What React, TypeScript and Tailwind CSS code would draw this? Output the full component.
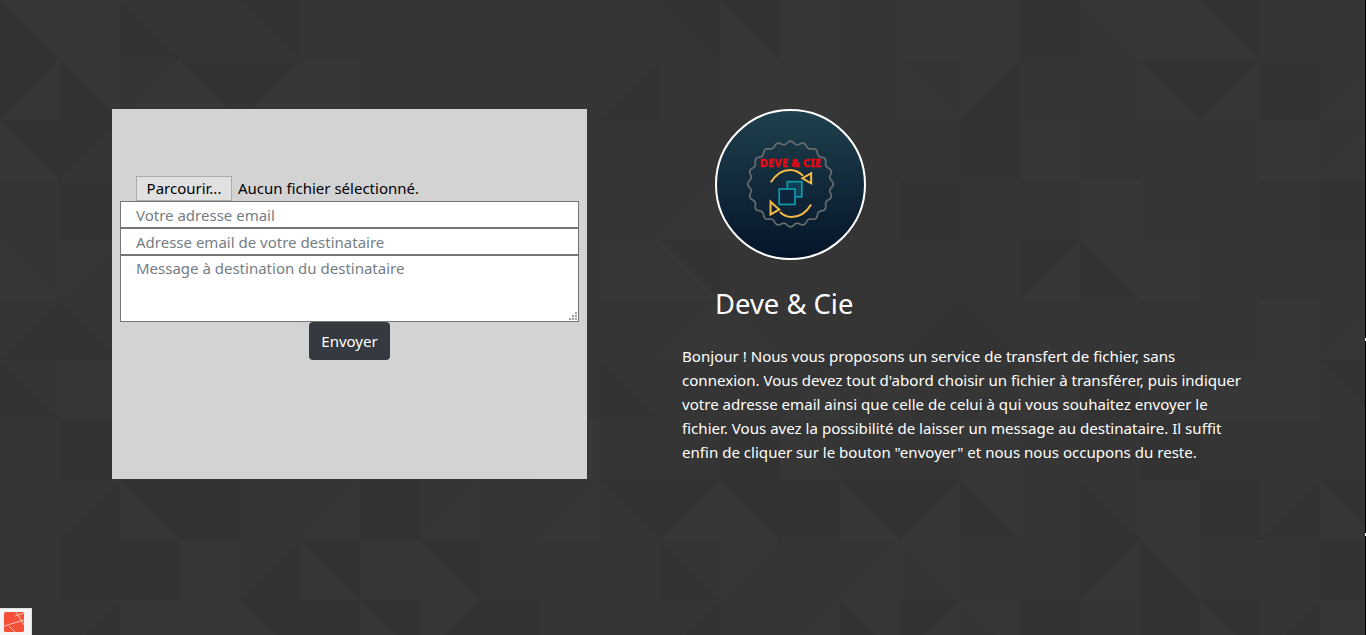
const FONT = "font-['Noto_Sans','Liberation_Sans',sans-serif]";

// 60px triangle grid, one row per line. Token: shade, or "\ab" / "/ab" for a split cell
const BG_ROWS = [
  "\\dl l \\dm m \\md m m m m m m \\md \\ld l m \\ll l d \\ml l \\ld m m",
  "/dl \\dl /ml \\ld /dl l m m m m /md m l l m \\lm /ld \\mm m \\ld /dl d /ml",
  "\\ld /dm m l m l m m l m m m m m m m d l m m m l /ml",
  "m d m m m m m m m m m /ml l m m d m m l m m m d",
  "\\lm /lm m m m m m m m m l \\ld m m m m m /dl \\dl l m m m",
  "/md \\dm m m m m m m m m m /ml \\lm m m /md \\dm m m m m l /ml",
  "\\dm l m m m m m m m m \\dm m m /ml \\ml m m l d m l l \\md",
  "m d m m m m m m m l m m d \\lm m m l m m d m m m",
  "m /md \\ld d m /ml d /ml m /ml \\md /dl \\ld d \\ld /dl \\dl m \\dm l d /md \\ld",
  "m d d l /md \\ld /ll \\ld m m m \\dm /lm m /ml \\ml m m /dl \\dl m m d",
  "m /md l l \\ld d \\ld /ld d m m /md m /ml \\dl /dl \\ml d m d \\ld /md l",
];

const SHADE: Record<string, string> = { m: "#353535", d: "#333333", l: "#373737" };

function TriangleBackground() {
  return (
    <svg className="absolute inset-0" width="1366" height="635" aria-hidden="true">
      {BG_ROWS.map((row, r) =>
        row.split(" ").map((cell, c) => {
          const x = c * 60;
          const y = r * 60;
          const x2 = x + 60;
          const y2 = y + 60;
          if (cell[0] === "\\") {
            return (
              <g key={`${r}-${c}`}>
                <rect x={x} y={y} width="60" height="60" fill={SHADE[cell[1]]} />
                <polygon points={`${x},${y} ${x2},${y} ${x2},${y2}`} fill={SHADE[cell[2]]} />
              </g>
            );
          }
          if (cell[0] === "/") {
            return (
              <g key={`${r}-${c}`}>
                <rect x={x} y={y} width="60" height="60" fill={SHADE[cell[1]]} />
                <polygon points={`${x2},${y} ${x2},${y2} ${x},${y2}`} fill={SHADE[cell[2]]} />
              </g>
            );
          }
          return <rect key={`${r}-${c}`} x={x} y={y} width="60" height="60" fill={SHADE[cell]} />;
        }),
      )}
    </svg>
  );
}

function scallopPoints() {
  const pts: string[] = [];
  for (let i = 0; i < 360; i++) {
    const a = (i / 360) * Math.PI * 2;
    const rad = 41 + 1.5 * Math.cos(a * 20);
    pts.push(`${(75 + rad * Math.sin(a)).toFixed(2)},${(74.5 - rad * Math.cos(a)).toFixed(2)}`);
  }
  return pts.join(" ");
}

function Logo() {
  return (
    <svg width="151" height="151" viewBox="0 0 150 150" className="block">
      <defs>
        <linearGradient id="logoBg" x1="0" y1="0" x2="0" y2="1">
          <stop offset="0" stopColor="#1f404d" />
          <stop offset="1" stopColor="#051429" />
        </linearGradient>
      </defs>
      <circle cx="75" cy="75" r="74" fill="url(#logoBg)" stroke="#fff" strokeWidth="2" />
      <polygon points={scallopPoints()} fill="none" stroke="#666c6f" strokeWidth="1.7" />
      <text
        x="75"
        y="57.8"
        textAnchor="middle"
        fill="#ee0510"
        stroke="#ee0510"
        strokeWidth="0.25"
        fontSize="11"
        fontWeight="800"
        textLength="61"
        fontFamily="'Noto Sans', sans-serif"
      >
        DEVE &amp; CIE
      </text>
      <g fill="none" stroke="#f6bb48" strokeWidth="2">
        <path d="M55.5 72.8Q63 60.5 74.5 60.5Q82 60.5 87.5 66.5" />
        <polygon points="86.8,68.8 95.5,63.8 95.5,73.8" />
        <path d="M95.5 94.8Q88 107.2 76.2 107.2Q69 107.2 64.5 102.2" />
        <polygon points="63.8,99.8 55.2,92.2 55.2,104.8" />
      </g>
      <g stroke="#0c9dad" strokeWidth="1.7">
        <rect x="71.8" y="72.2" width="14.4" height="15" fill="#0d3f52" />
        <rect x="63.8" y="79.5" width="15.7" height="15.3" fill="#10233c" />
      </g>
    </svg>
  );
}

function DebugBadge() {
  return (
    <div className="absolute bottom-0 left-0 flex h-[27px] w-[32px] items-start border-t border-r border-[#e0e0e0] bg-[#f5f5f5] pt-[3px] pl-[4px]">
      <svg width="20" height="20" viewBox="0 0 20 20">
        <rect width="20" height="20" rx="1.5" fill="#f4503a" />
        <path d="M0 14L20 8M5 14L11 20M12 0L20 13M11 4L20 1" stroke="#ffd9d2" strokeWidth="0.8" fill="none" />
      </svg>
    </div>
  );
}

export default function App() {
  return (
    <div className={`relative h-[635px] w-[1366px] overflow-hidden bg-[#353535] ${FONT}`}>
      <TriangleBackground />

      <main className="relative flex gap-[95px] pt-[109px] pl-[112px]">
        <form className="flex h-[370px] w-[475px] flex-col bg-[#d3d3d3] px-[8px] pt-[66px]">
          <div className="flex h-[26px] items-center gap-[6px] pl-[16px] text-[15px] text-black">
            <button type="button" className="h-[25px] w-[96px] border border-[#adadad] bg-[#e1e1e1]">
              Parcourir...
            </button>
            <span>Aucun fichier sélectionné.</span>
          </div>
          <input
            placeholder="Votre adresse email"
            className="h-[27px] border border-[#767676] bg-white px-[15px] text-[15px] placeholder:text-[#757d84]"
          />
          <input
            placeholder="Adresse email de votre destinataire"
            className="h-[27px] border border-[#767676] bg-white px-[15px] text-[15px] placeholder:text-[#757d84]"
          />
          <div className="relative flex h-[67px]">
            <textarea
              placeholder="Message à destination du destinataire"
              className="flex-1 resize-none border border-[#767676] bg-white px-[15px] py-[1px] text-[15px] placeholder:text-[#757d84]"
            />
            {/* resize grip */}
            <svg className="absolute right-[2px] bottom-[2px]" width="8" height="8" viewBox="0 0 8 8" fill="#a3a3a3">
              <rect x="6" y="0" width="2" height="2" />
              <rect x="3" y="3" width="2" height="2" />
              <rect x="6" y="3" width="2" height="2" />
              <rect x="0" y="6" width="2" height="2" />
              <rect x="3" y="6" width="2" height="2" />
              <rect x="6" y="6" width="2" height="2" />
            </svg>
          </div>
          <button
            type="button"
            className="mx-auto h-[38px] w-[81px] rounded-[4px] bg-[#343a40] text-[15px] text-white"
          >
            Envoyer
          </button>
        </form>

        <section className="w-[565px] text-white">
          <div className="pl-[33px]">
            <Logo />
            <h3 className="mt-[24px] h-[40px] text-[27.4px] leading-[40px]">Deve &amp; Cie</h3>
          </div>
          <p className="mt-[20px] text-[15.08px] leading-[24px]">
            Bonjour ! Nous vous proposons un service de transfert de fichier, sans connexion. Vous devez tout
            d'abord choisir un fichier à transférer, puis indiquer votre adresse email ainsi que celle de celui
            à qui vous souhaitez envoyer le fichier. Vous avez la possibilité de laisser un message au
            destinataire. Il suffit enfin de cliquer sur le bouton "envoyer" et nous nous occupons du reste.
          </p>
        </section>
      </main>

      <DebugBadge />

      {/* window edge at the far right */}
      <div className="absolute top-0 right-0 h-full w-px bg-black" />
      <div className="absolute top-[338px] right-0 h-[3px] w-px bg-white" />
      <div className="absolute top-[533px] right-0 h-[3px] w-px bg-white" />
    </div>
  );
}
